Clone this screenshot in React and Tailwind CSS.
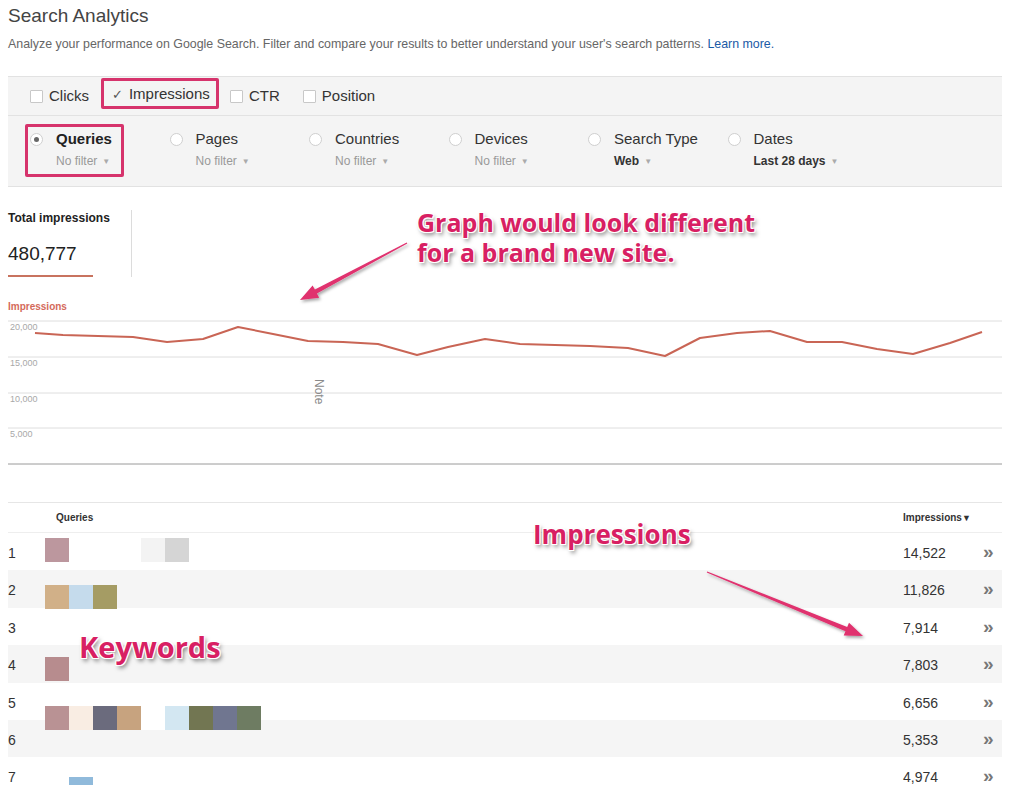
import React from 'react';

const linePts = [
  [35, 333], [63, 335], [98, 336], [133, 337], [167, 342], [203, 339], [238, 327],
  [273, 334], [308, 341], [343, 342], [378, 344], [417, 355], [448, 347], [485, 339],
  [520, 344], [555, 345], [590, 346], [628, 348], [665, 356], [700, 338], [737, 333],
  [770, 331], [807, 342], [842, 342], [877, 349], [913, 354], [950, 343], [982, 332],
];

const rows = [
  { n: 1, v: '14,522', off: 5, sw: ['#bc979e', null, null, null, '#f3f3f3', '#d5d5d5'] },
  { n: 2, v: '11,826', off: 15, sw: ['#d1b088', '#c5dbec', '#a59c64'] },
  { n: 3, v: '7,914', off: 0, sw: [] },
  { n: 4, v: '7,803', off: 12, sw: ['#b78c8e'] },
  { n: 5, v: '6,656', off: 23, sw: ['#b99294', '#f9ede3', '#6b6b7d', '#c7a37f', '#ffffff', '#d3e7f2', '#727652', '#707690', '#6e7c62'] },
  { n: 6, v: '5,353', off: 0, sw: [] },
  { n: 7, v: '4,974', off: 20, sw: [null, '#90badb'], short: true },
];

const dims = [
  { label: 'Queries', sub: 'No filter', active: true },
  { label: 'Pages', sub: 'No filter' },
  { label: 'Countries', sub: 'No filter' },
  { label: 'Devices', sub: 'No filter' },
  { label: 'Search Type', sub: 'Web', strong: true },
  { label: 'Dates', sub: 'Last 28 days', strong: true },
];

const pinkText =
  "font-['Open_Sans',sans-serif] font-bold text-[#d81f63] [text-shadow:0_0_2px_#fff,1px_1px_0_#fff,-1px_-1px_0_#fff,1px_-1px_0_#fff,-1px_1px_0_#fff,2px_3px_4px_rgba(0,0,0,0.5)]";

function arrowPoints(x1, y1, x2, y2) {
  const dx = x2 - x1;
  const dy = y2 - y1;
  const len = Math.hypot(dx, dy);
  const ux = dx / len;
  const uy = dy / len;
  const nx = -uy;
  const ny = ux;
  const bx = x2 - ux * 18;
  const by = y2 - uy * 18;
  const p = (x, y) => `${x.toFixed(1)},${y.toFixed(1)}`;
  return [
    p(x1 + nx * 0.6, y1 + ny * 0.6),
    p(bx + nx * 2.2, by + ny * 2.2),
    p(bx + nx * 7, by + ny * 7),
    p(x2, y2),
    p(bx - nx * 7, by - ny * 7),
    p(bx - nx * 2.2, by - ny * 2.2),
    p(x1 - nx * 0.6, y1 - ny * 0.6),
  ].join(' ');
}

function Checkbox({ className = '' }) {
  return <span className={`block shrink-0 w-[13px] h-[13px] border border-[#c8c8c8] bg-white rounded-[1px] ${className}`} />;
}

function Caret() {
  return <span className="ml-[5px] text-[8px] text-[#aaa] align-middle">▼</span>;
}

export default function App() {
  return (
    <div className="relative w-[1024px] h-[791px] overflow-hidden bg-white font-['Liberation_Sans',Arial,sans-serif] text-[#333]">
      {/* header */}
      <div className="pt-[5px] pl-2">
        <h1 className="text-[19px] leading-[22px] text-[#444]">Search Analytics</h1>
        <p className="mt-[9px] text-[12.4px] leading-[16px] text-[#666]">
          Analyze your performance on Google Search. Filter and compare your results to better understand your user's search patterns.{' '}
          <span className="text-[#1a5aa6]">Learn more.</span>
        </p>
      </div>

      {/* filter panel */}
      <div className="ml-2 mt-[24px] w-[994px] bg-[#f4f4f4] border-t border-b border-[#e2e2e2]">
        <div className="h-[38px] flex items-center pl-[22px] text-[15px] text-[#333]">
          <Checkbox />
          <span className="ml-[6px]">Clicks</span>
          <div className="ml-[12px] self-start mt-[1px] h-[31px] w-[118px] border-[3px] border-[#d6336c] rounded-[2px] flex items-center pl-[8px] pt-[2px]">
            <span className="text-[13px] text-[#555] font-['DejaVu_Sans',sans-serif]">✓</span>
            <span className="ml-[6px]">Impressions</span>
          </div>
          <Checkbox className="ml-[11px]" />
          <span className="ml-[6px]">CTR</span>
          <Checkbox className="ml-[23px]" />
          <span className="ml-[6px]">Position</span>
        </div>
        <div className="h-[71px] border-t border-[#e2e2e2] flex pl-[22px] pt-[14px]">
          {dims.map((d) => (
            <div key={d.label} className="relative w-[139.5px] flex items-start">
              {d.active && (
                <div className="absolute left-[-5px] top-[-6px] w-[99px] h-[53px] border-[3px] border-[#d6336c] rounded-[2px]" />
              )}
              <span className="mt-[3px] w-[13px] h-[13px] rounded-full border border-[#cfcfcf] bg-white flex items-center justify-center">
                {d.active && <span className="w-[5px] h-[5px] rounded-full bg-[#666]" />}
              </span>
              <div className="ml-[13px]">
                <div className={`text-[15px] leading-[18px] ${d.active ? 'font-bold text-[#222]' : 'text-[#333]'}`}>{d.label}</div>
                <div className={`mt-[5px] text-[12px] leading-[16px] ${d.strong ? 'font-bold text-[#333]' : 'text-[#999]'}`}>
                  {d.sub}
                  <Caret />
                </div>
              </div>
            </div>
          ))}
        </div>
      </div>

      {/* total */}
      <div className="mt-[23px] pl-2 flex">
        <div className="w-[124px] h-[67px] border-r border-[#dcdcdc]">
          <div className="text-[12px] leading-[16px] font-bold text-[#222]">Total impressions</div>
          <div className="mt-[16px] text-[19px] leading-[24px] text-[#222]">480,777</div>
          <div className="mt-[9px] h-[2px] w-[85px] bg-[#c8735f]" />
        </div>
      </div>

      {/* chart */}
      <div className="pl-2 mt-[24px]">
        <div className="text-[10px] leading-[12px] font-bold text-[#d46a5b]">Impressions</div>
        <svg width="994" height="160" className="block">
          {[8, 44, 80, 115].map((y) => (
            <line key={y} x1="0" x2="994" y1={y} y2={y} stroke="#dedede" strokeWidth="1" />
          ))}
          <line x1="0" x2="994" y1="151" y2="151" stroke="#9a9a9a" strokeWidth="1" />
          {[
            ['20,000', 17],
            ['15,000', 53],
            ['10,000', 89],
            ['5,000', 124],
          ].map(([t, y]) => (
            <text key={t} x="2" y={y} fontSize="9" fill="#a8a8a8" fontFamily="Liberation Sans, Arial, sans-serif">
              {t}
            </text>
          ))}
          <text
            x="0"
            y="0"
            fontSize="12"
            fill="#8a8a8a"
            fontFamily="Liberation Sans, Arial, sans-serif"
            transform="translate(307 66) rotate(90)"
          >
            Note
          </text>
          <polyline
            points={linePts.map(([x, y]) => `${x - 8},${y - 313}`).join(' ')}
            fill="none"
            stroke="#c96555"
            strokeWidth="2"
            strokeLinejoin="round"
          />
        </svg>
      </div>

      {/* table */}
      <div className="ml-2 mt-[29px] w-[994px] border-t border-[#e6e6e6]">
        <div className="h-[30px] flex items-center text-[10px] font-bold text-[#333] border-b border-[#eeeeee]">
          <div className="w-[37px]" />
          <div className="flex-1 pl-[11px]">Queries</div>
          <div className="w-[99px]">Impressions<span className="text-[9px]">▼</span></div>
        </div>
        {rows.map((r, i) => (
          <div
            key={r.n}
            className={`relative h-[37.4px] flex items-start text-[14px] text-[#333] ${i % 2 === 1 ? 'bg-[#f5f5f5]' : 'bg-white'}`}
          >
            <div className="w-[37px] pt-[10px]">{r.n}</div>
            <div className="flex-1 relative z-10">
              <div className="flex" style={{ marginTop: r.off }}>
                {r.sw.map((c, k) => (
                  <div
                    key={k}
                    className={`w-[24px] ${r.short ? 'h-[8px]' : 'h-[24px]'}`}
                    style={{ background: c || 'transparent' }}
                  />
                ))}
              </div>
            </div>
            <div className="w-[80px] pt-[10px]">{r.v}</div>
            <div className="w-[19px] pt-[7px] text-[19px] font-bold text-[#777] leading-[24px]">»</div>
          </div>
        ))}
      </div>

      {/* annotations */}
      <div className={`absolute left-[417px] top-[207px] text-[25px] leading-[30px] ${pinkText}`}>
        Graph would look different
        <br />
        for a brand new site.
      </div>
      <div className={`absolute left-[533px] top-[517px] text-[26px] leading-[34px] ${pinkText}`}>Impressions</div>
      <div className={`absolute left-[79px] top-[628px] text-[29px] leading-[38px] ${pinkText}`}>Keywords</div>

      <svg className="absolute left-0 top-0 pointer-events-none" width="1024" height="791">
        <defs>
          <filter id="sh" x="-20%" y="-20%" width="140%" height="140%">
            <feDropShadow dx="1.5" dy="2" stdDeviation="1.5" floodColor="#000" floodOpacity="0.35" />
          </filter>
        </defs>
        <polygon points={arrowPoints(407, 243, 300, 300)} fill="#e0306e" filter="url(#sh)" />
        <polygon points={arrowPoints(707, 572, 863, 636)} fill="#e0306e" filter="url(#sh)" />
      </svg>
    </div>
  );
}
